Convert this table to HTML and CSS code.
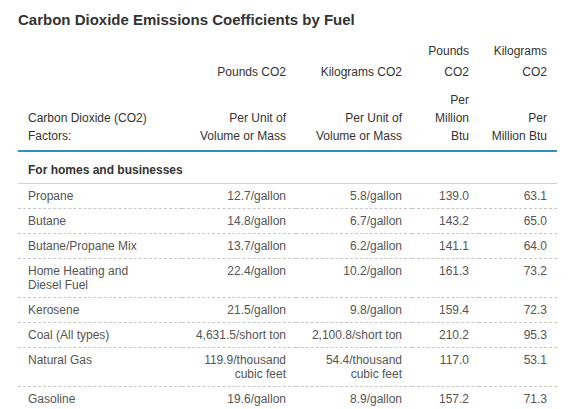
FILE: index.html
```html
<!DOCTYPE html>
<html lang="en">
<head>
    <meta charset="UTF-8">
    <meta name="viewport" content="width=device-width, initial-scale=1.0">
    <title>Carbon Dioxide Emissions Coefficients</title>
    <link rel="stylesheet" href="styles.css">
</head>
<body>

    <div class="wrap">
        <h2 class="table-title">Carbon Dioxide Emissions Coefficients by Fuel</h2>

        <table class="co2-table">
            <colgroup>
                <col class="col-fuel">
                <col class="col-lbs">
                <col class="col-kg">
                <col class="col-lbs-btu">
                <col class="col-kg-btu">
            </colgroup>
            <thead>
                <tr class="head-units">
                    <th></th>
                    <th>Pounds CO2</th>
                    <th>Kilograms CO2</th>
                    <th>Pounds<br>CO2</th>
                    <th>Kilograms<br>CO2</th>
                </tr>
                <tr class="head-per">
                    <th>Carbon Dioxide (CO2)<br>Factors:</th>
                    <th>Per Unit of<br>Volume or Mass</th>
                    <th>Per Unit of<br>Volume or Mass</th>
                    <th>Per<br>Million<br>Btu</th>
                    <th>Per<br>Million Btu</th>
                </tr>
            </thead>
            <tbody>
                <tr class="section">
                    <td colspan="5">For homes and businesses</td>
                </tr>
                <tr>
                    <td>Propane</td>
                    <td>12.7/gallon</td>
                    <td>5.8/gallon</td>
                    <td>139.0</td>
                    <td>63.1</td>
                </tr>
                <tr>
                    <td>Butane</td>
                    <td>14.8/gallon</td>
                    <td>6.7/gallon</td>
                    <td>143.2</td>
                    <td>65.0</td>
                </tr>
                <tr>
                    <td>Butane/Propane Mix</td>
                    <td>13.7/gallon</td>
                    <td>6.2/gallon</td>
                    <td>141.1</td>
                    <td>64.0</td>
                </tr>
                <tr>
                    <td>Home Heating and<br>Diesel Fuel</td>
                    <td>22.4/gallon</td>
                    <td>10.2/gallon</td>
                    <td>161.3</td>
                    <td>73.2</td>
                </tr>
                <tr>
                    <td>Kerosene</td>
                    <td>21.5/gallon</td>
                    <td>9.8/gallon</td>
                    <td>159.4</td>
                    <td>72.3</td>
                </tr>
                <tr>
                    <td>Coal (All types)</td>
                    <td>4,631.5/short ton</td>
                    <td>2,100.8/short ton</td>
                    <td>210.2</td>
                    <td>95.3</td>
                </tr>
                <tr>
                    <td>Natural Gas</td>
                    <td>119.9/thousand<br>cubic feet</td>
                    <td>54.4/thousand<br>cubic feet</td>
                    <td>117.0</td>
                    <td>53.1</td>
                </tr>
                <tr>
                    <td>Gasoline</td>
                    <td>19.6/gallon</td>
                    <td>8.9/gallon</td>
                    <td>157.2</td>
                    <td>71.3</td>
                </tr>
            </tbody>
        </table>
    </div>

</body>
</html>
```

FILE: styles.css
```css
* {
    box-sizing: border-box;
    margin: 0;
    padding: 0;
}

body {
    font-family: 'Liberation Sans', Arial, sans-serif;
    background-color: #fff;
    color: #333;
}

.wrap {
    padding: 11px 0 0 18px;
}

.table-title {
    font-size: 15px;
    font-weight: bold;
    color: #333;
    margin-bottom: 8px;
}

.co2-table {
    width: 539px;
    table-layout: fixed;
    border-collapse: separate;
    border-spacing: 0;
    font-size: 12px;
}

.col-fuel { width: 164px; }
.col-lbs { width: 114px; }
.col-kg { width: 116px; }
.col-lbs-btu { width: 67px; }
.col-kg-btu { width: 78px; }

.co2-table th {
    font-weight: normal;
    color: #333;
    text-align: right;
    vertical-align: bottom;
    padding: 5px 10px;
}

.co2-table th:first-child {
    text-align: left;
}

.head-units th {
    line-height: 21px;
    padding-bottom: 3px;
}

.head-per th {
    line-height: 18px;
    border-bottom: 2px solid #2a92c3;
}

.co2-table td {
    color: #555;
    line-height: 14px;
    padding: 5px 10px;
    text-align: right;
    vertical-align: top;
    border-bottom: 1px dashed #c8c8c8;
}

.co2-table td:first-child {
    text-align: left;
}

.co2-table .section td {
    font-weight: bold;
    color: #333;
    text-align: left;
    padding: 11px 10px 6px;
    border-bottom: 1px solid #cfcfcf;
}
```
